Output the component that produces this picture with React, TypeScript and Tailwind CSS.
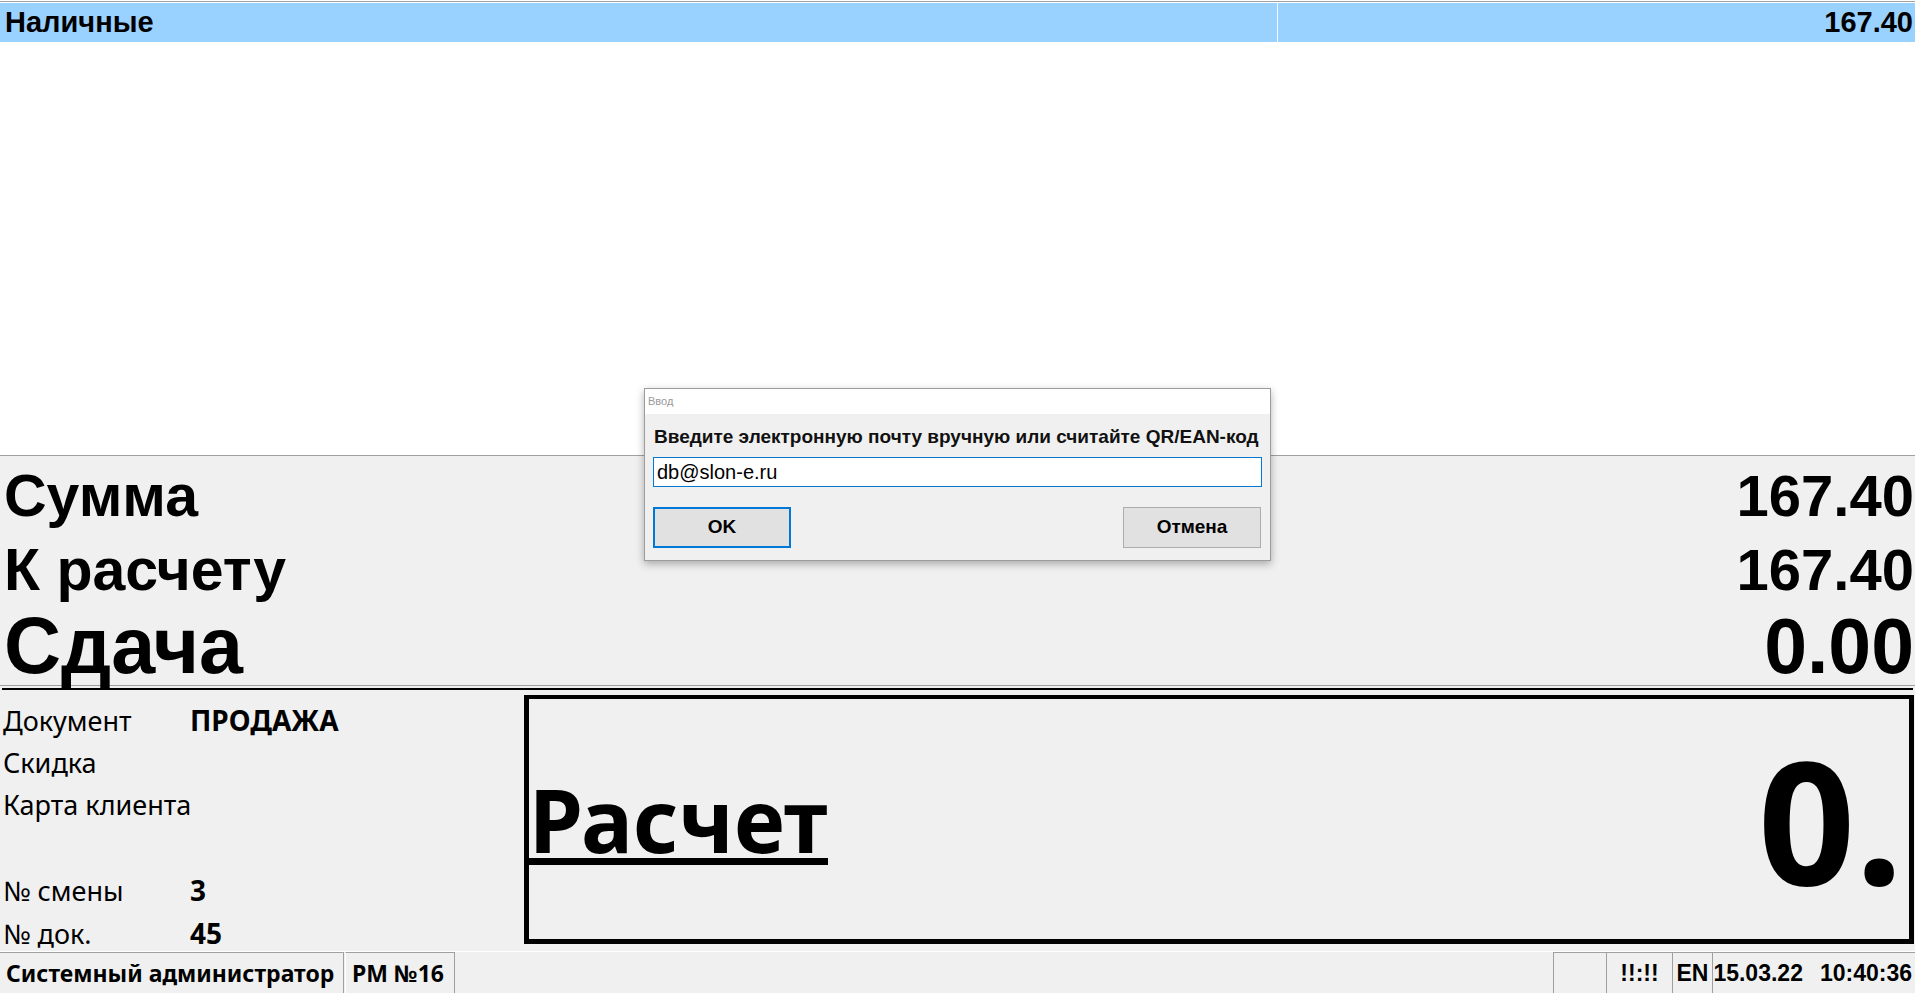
import React from 'react';

const InfoRow: React.FC<{ label?: string; value?: string }> = ({ label, value }) => (
    <div className="flex items-baseline h-[42.5px] leading-[42.5px] whitespace-nowrap">
        <div className="w-[187px] shrink-0 text-[27px]">{label}</div>
        <div className="text-[28px] font-bold">{value}</div>
    </div>
);

const App: React.FC = () => {
    return (
        <div className="relative w-[1915px] h-[993px] overflow-hidden bg-white text-black font-['Liberation_Sans',Arial,sans-serif]">
            {/* payments list */}
            <div className="h-[1px]" />
            <div className="h-[1px] bg-[#a0a0a0]" />
            <div className="h-[1px]" />
            <div className="flex h-[39px] bg-[#99d1ff] text-[29px] font-bold leading-[39px]">
                <div className="w-[1278px] pl-[5px] border-r border-[#f4f9ff]">Наличные</div>
                <div className="flex-1 text-right pr-[2px]">167.40</div>
            </div>
            <div className="h-[413px] bg-white" />
            <div className="h-[1px] bg-[#a0a0a0]" />

            {/* totals */}
            <div className="h-[229px] bg-[#f0f0f0] pt-[3px] pl-[4px] pr-[1px] font-bold">
                <div className="flex items-baseline justify-between h-[74px] leading-[74px]">
                    <span className="text-[59px]">Сумма</span>
                    <span className="text-[58px]">167.40</span>
                </div>
                <div className="flex items-baseline justify-between h-[74px] leading-[74px]">
                    <span className="text-[59px]">К расчету</span>
                    <span className="text-[58px]">167.40</span>
                </div>
                <div className="flex items-baseline justify-between h-[78px] leading-[78px]">
                    <span className="text-[79px]">Сдача</span>
                    <span className="text-[77px]">0.00</span>
                </div>
            </div>
            <div className="h-[1px] bg-[#a0a0a0]" />
            <div className="h-[2px] bg-[#f0f0f0]" />
            <div className="h-[2px] bg-[#f0f0f0] px-[2px]">
                <div className="h-full bg-black" />
            </div>

            {/* document info + payment box */}
            <div className="flex h-[261px] bg-[#f0f0f0]">
                <div className="w-[524px] pt-[9px] pl-[3px] font-['Noto_Sans',sans-serif]">
                    <InfoRow label="Документ" value="ПРОДАЖА" />
                    <InfoRow label="Скидка" />
                    <InfoRow label="Карта клиента" />
                    <InfoRow />
                    <InfoRow label="№ смены" value="3" />
                    <InfoRow label="№ док." value="45" />
                </div>
                <div className="flex-1 mt-[5px] mb-[7px] mr-[1px] border-[5px] border-t-[4px] border-black flex items-center justify-between font-['Noto_Sans',sans-serif] font-bold">
                    <span className="inline-block mt-[7px] text-[87px] leading-[78px] border-b-[7px] border-black">Расчет</span>
                    <span className="text-[170px] leading-none pr-[6px]">0.</span>
                </div>
            </div>

            {/* status bar */}
            <div className="flex h-[42px] border-t border-white bg-[#f0f0f0] leading-[40px]">
                <div className="w-[344px] pl-[6px] border-t border-r border-[#a0a0a0] text-[23px] font-bold font-['Noto_Sans',sans-serif]">Системный администратор</div>
                <div className="ml-[1px] w-[110px] pl-[6px] border-t border-l border-r border-[#a0a0a0] border-l-white text-[23px] font-bold font-['Noto_Sans',sans-serif]">РМ №16</div>
                <div className="flex-1" />
                <div className="w-[53px] border-t border-l border-[#a0a0a0]" />
                <div className="w-[66px] border-t border-l border-[#a0a0a0] text-center text-[23px] font-bold">!!:!!</div>
                <div className="w-[40px] border-t border-l border-[#a0a0a0] text-center text-[23px] font-bold">EN</div>
                <div className="w-[203px] border-t border-l border-[#a0a0a0] flex justify-end gap-[17px] pr-[3px] text-[23px] font-bold">
                    <span>15.03.22</span>
                    <span>10:40:36</span>
                </div>
            </div>

            {/* input dialog */}
            <div className="absolute left-[644px] top-[388px] w-[627px] h-[173px] border border-[#9c9c9c] bg-[#f0f0f0] shadow-[0_3px_8px_rgba(0,0,0,0.3)] flex flex-col">
                <div className="h-[25px] bg-white pl-[3px] text-[11px] leading-[25px] text-[#9a9a9a]">Ввод</div>
                <div className="flex-1 px-[8px] pt-[12px]">
                    <div className="pl-[1px] text-[19px] leading-[21px] font-bold text-[#111]">Введите электронную почту вручную или считайте QR/EAN-код</div>
                    <div className="mt-[10px] h-[30px] border border-[#0078d7] bg-white pl-[3px] text-[20px] leading-[28px]">db@slon-e.ru</div>
                    <div className="mt-[20px] flex justify-between">
                        <button className="w-[138px] h-[41px] border-2 border-[#0078d7] bg-[#e1e1e1] text-[19px] font-bold">OK</button>
                        <button className="w-[138px] h-[41px] mr-[1px] border border-[#adadad] bg-[#e1e1e1] text-[19px] font-bold">Отмена</button>
                    </div>
                </div>
            </div>
        </div>
    );
};

export default App;
